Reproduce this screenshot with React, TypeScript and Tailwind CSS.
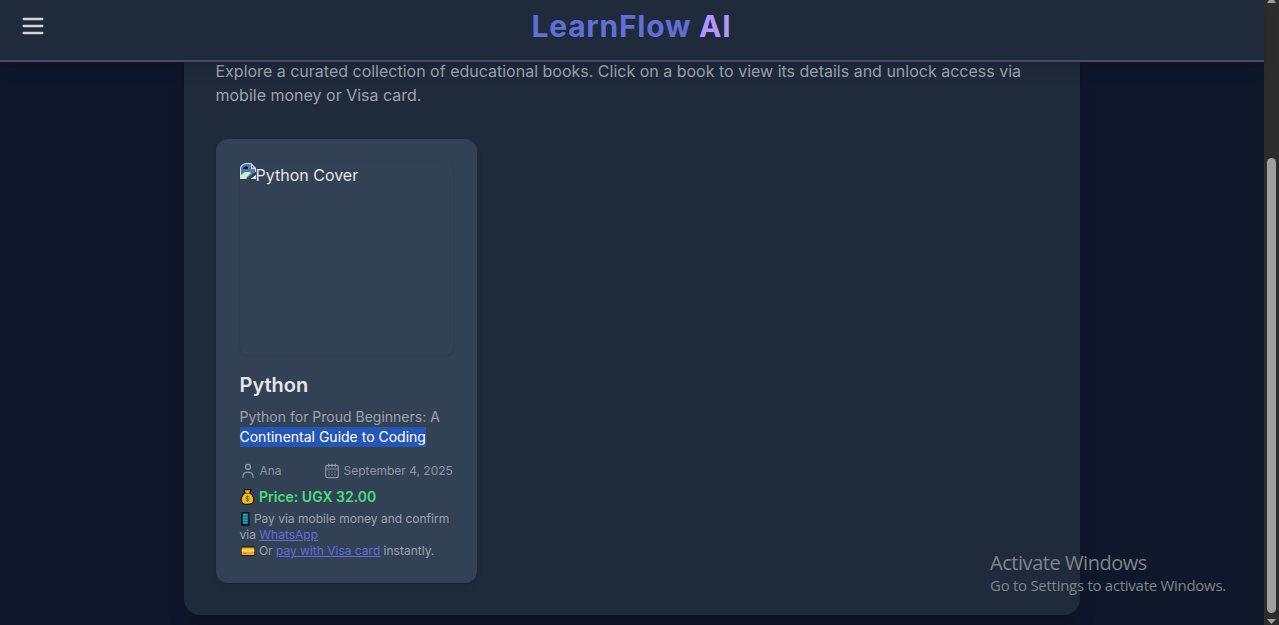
function MenuIcon() {
  return (
    <svg className="w-7 h-7" fill="none" stroke="currentColor" strokeWidth={2} strokeLinecap="round" viewBox="0 0 24 24">
      <path d="M4 6h16M4 12h16M4 18h16" />
    </svg>
  );
}

function UserIcon() {
  return (
    <svg className="w-4 h-4" fill="none" stroke="currentColor" strokeWidth={2} strokeLinecap="round" strokeLinejoin="round" viewBox="0 0 24 24">
      <circle cx="12" cy="6" r="3.700" />
      <path d="M4.500 21.500v-2a5.500 5.500 0 015.500-5.500h4a5.500 5.500 0 015.500 5.500v2" />
    </svg>
  );
}

function CalendarIcon() {
  return (
    <svg className="w-4 h-4" fill="none" stroke="currentColor" strokeWidth={1.8} strokeLinecap="round" strokeLinejoin="round" viewBox="0 0 24 24">
      <path d="M7 1.500v4M12 1.500v4M17 1.500v4M2.500 9h19M5.500 3.500h13a3 3 0 013 3V19a3 3 0 01-3 3h-13a3 3 0 01-3-3V6.500a3 3 0 013-3z" />
      <path d="M7.500 13.500h.01M12 13.500h.01M16.500 13.500h.01M7.500 17.500h.01M12 17.500h.01M16.500 17.500h.01" strokeWidth={2.2} />
    </svg>
  );
}

function BrokenImageIcon() {
  return (
    <svg className="w-4 h-4 shrink-0" viewBox="0 0 16 16">
      <path d="M0 4.500C1 2 3 .5 6 0h5l5 5v11H0z" fill="#d5dbe2" />
      <path d="M1 5C2 2.500 4 1 6.500 1H11v5h4v5l-4 4H1z" fill="#4d78b0" />
      <path d="M3 5l2-1.500h2l1 .5v2H3z" fill="#0b111b" />
      <path d="M1 15v-3l4-3h5l1 1-5 5z" fill="#c9f5c2" />
      <path d="M11 .5L15.500 5H11z" fill="#e8edf2" />
      <path d="M12 2.500L14 4.500h-2z" fill="#10151d" />
      <path d="M16 8.500V12l-5 4H6z" fill="#334155" />
      <path d="M16 12v4h-5.500z" fill="#dce2e8" />
    </svg>
  );
}

function MoneyBagIcon() {
  return (
    <svg className="inline-block w-4 h-4 align-[-3px]" viewBox="0 0 16 16">
      <path d="M4 .7h7L9.700 4C12 5 13.700 8.300 13.700 11c0 3.200-2 4.400-6.200 4.400S1.300 14.200 1.300 11c0-2.700 1.700-6 4-7z" fill="#fdb90b" stroke="#15171b" strokeWidth="1.200" strokeLinejoin="round" />
      <path d="M5.300 4.300h4.400" stroke="#8a5a08" />
      <path d="M9.200 8c-.8-.8-3.300-.7-3.300.6 0 1.400 3.300.7 3.300 2.100 0 1.200-2.500 1.400-3.500.4M7.500 6.300v6.400" fill="none" stroke="#33762f" strokeWidth="1" />
    </svg>
  );
}

function PhoneIcon() {
  return (
    <svg className="inline-block w-[11px] h-[14px] align-[-3px]" viewBox="0 0 11 14">
      <rect x="1" y="0" width="8.500" height="14" rx="1" fill="#12161b" />
      <rect x="2.700" y="1.500" width="5.200" height="10.500" fill="#10708f" />
      <path d="M3 2h4.500v1.500H3zM3 4.700h4.500v1.500H3zM3 7.400h4.500v1.500H3zM3 10h4.500v1.300H3z" fill="#18a2c6" />
    </svg>
  );
}

function CardIcon() {
  return (
    <svg className="inline-block w-4 h-[14px] align-[-3px]" viewBox="0 0 16 14">
      <rect x="1" y="2.500" width="14" height="9.500" rx="1" fill="#15171b" />
      <rect x="1.700" y="3.500" width="12.600" height="7.500" fill="#f6a90c" />
      <path d="M1.700 5.500h12.600v2H1.700z" fill="#ffe08a" />
      <path d="M3 9.300h4" stroke="#c87905" />
    </svg>
  );
}

const books = [
  {
    title: 'Python',
    author: 'Ana',
    date: 'September 4, 2025',
    price: 'UGX 32.00',
  },
];

export default function App() {
  return (
    <div className="flex h-screen overflow-hidden bg-[#0f172a] font-['Inter',sans-serif] text-[#e5e7eb]">
      <div className="flex-1 min-w-0">
        {/* Header */}
        <header className="relative z-10 h-[62px] px-[19px] pb-2 flex items-center bg-[#1f2a3b] border-b-2 border-[#4b4876] shadow-lg">
          <button className="text-[#d1d5db]">
            <MenuIcon />
          </button>
          <h1 className="flex-1 pr-[29px] text-center text-3xl font-bold tracking-wide text-[#5f6fd6]">
            LearnFlow <span className="text-[#b395ff]">AI</span>
          </h1>
        </header>

        {/* Book list */}
        <main className="-mt-[35px] ml-[183.5px] w-4xl h-[588px] px-8 pt-8 bg-[#1f2a3b] rounded-2xl shadow-xl">
          <p className="mb-8 text-base text-[#9ca3af]">
            Explore a curated collection of educational books. Click on a book to view its details and unlock access via
            mobile money or Visa card.
          </p>
          <div className="grid grid-cols-3 gap-6">
            {books.map((book) => (
              <div key={book.title} className="p-6 bg-[#334155] rounded-xl shadow-md">
                <div className="flex items-start h-48 mb-4 rounded-lg shadow-sm">
                  <BrokenImageIcon />
                  <span>{book.title} Cover</span>
                </div>
                <h2 className="mb-2 text-xl font-semibold text-[#e5e7eb]">{book.title}</h2>
                <p className="mb-4 text-sm text-[#9ca3af]">
                  Python for Proud Beginners: A <br />
                  <span className="inline-block h-5 bg-[#2456b8] text-white align-top">Continental Guide to Coding</span>
                </p>
                <div className="mb-2 flex items-center justify-between text-xs text-[#8c96a8]">
                  <span className="flex items-center gap-1">
                    <UserIcon />
                    {book.author}
                  </span>
                  <span className="flex items-center gap-1">
                    <CalendarIcon />
                    {book.date}
                  </span>
                </div>
                <p className="mb-1 text-sm font-semibold text-[#4ade80]">
                  <MoneyBagIcon /> Price: {book.price}
                </p>
                <p className="text-xs text-[#9ca3af]">
                  <PhoneIcon /> Pay via mobile money and confirm via{' '}
                  <a className="text-[#636bdd] underline">WhatsApp</a>
                  <br />
                  <CardIcon /> Or <a className="text-[#636bdd] underline">pay with Visa card</a> instantly.
                </p>
              </div>
            ))}
          </div>
        </main>
      </div>

      {/* Scrollbar */}
      <div className="w-[15px] shrink-0 flex flex-col items-center bg-[#2c2c2c]">
        <svg className="w-[9px] h-[3px]" viewBox="0 0 9 3">
          <path d="M2 0h5l2 3H0z" fill="#9f9f9f" />
        </svg>
        <div className="mt-[155px] w-[9px] h-[455px] rounded-full bg-[#9f9f9f]" />
        <svg className="mt-[6px] w-[9px] h-[5px]" viewBox="0 0 9 5">
          <path d="M0 0h9L4.500 5z" fill="#9f9f9f" />
        </svg>
      </div>

      {/* Windows watermark */}
      <div className="absolute z-20 left-[990px] top-[550px] font-['Open_Sans',sans-serif] text-[#7f848c] whitespace-nowrap">
        <div className="text-[20px] leading-[26px] tracking-[-0.45px]">Activate Windows</div>
        <div className="text-[15px] leading-5 -mt-px tracking-[-0.28px]">Go to Settings to activate Windows.</div>
      </div>
    </div>
  );
}
